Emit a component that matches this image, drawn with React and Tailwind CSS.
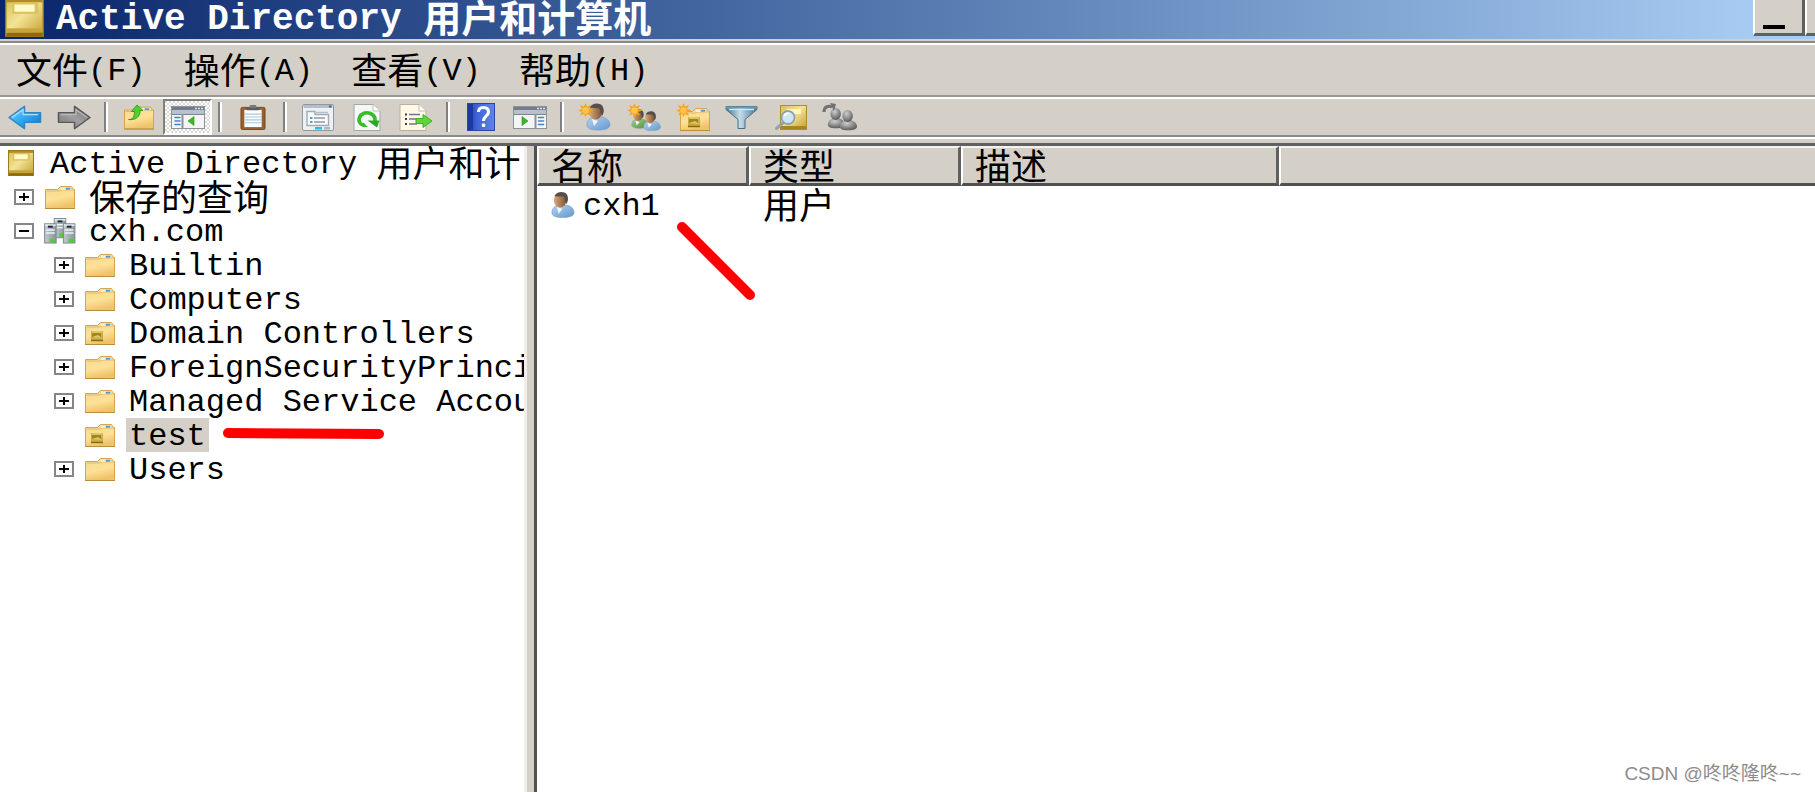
const mono = "font-['Liberation_Mono','Noto_Sans_CJK_SC',monospace]";

// Chinese runs are set larger than the half-width latin around them,
// so both are centred on the row instead of sharing a baseline
const Mixed = ({ text, cjk = "text-[36px]" }) => (
  <span className="flex items-center whitespace-pre">
    {text.split(/([\u4e00-\u9fff]+)/).filter(Boolean).map((part, i) =>
      /[\u4e00-\u9fff]/.test(part) ? (
        <span key={i} className={`${cjk} pb-1 leading-[34px] font-['Noto_Sans_CJK_SC',sans-serif]`}>
          {part}
        </span>
      ) : (
        <span key={i} className="pt-[3px] leading-[31px]">
          {part}
        </span>
      )
    )}
  </span>
);

const Gradients = () => (
  <svg className="absolute w-0 h-0" aria-hidden="true">
    <defs>
      <linearGradient id="folder" x1="0" y1="0" x2="0.3" y2="1">
        <stop offset="0" stopColor="#f6d88c" />
        <stop offset="0.6" stopColor="#fde198" />
        <stop offset="1" stopColor="#eec46a" />
      </linearGradient>
      <linearGradient id="gold" x1="0" y1="0" x2="1" y2="1">
        <stop offset="0" stopColor="#d9bf58" />
        <stop offset="0.45" stopColor="#f3e395" />
        <stop offset="1" stopColor="#c39d2c" />
      </linearGradient>
      <linearGradient id="blueArrow" x1="0" y1="0" x2="1" y2="1">
        <stop offset="0" stopColor="#8fd4fb" />
        <stop offset="0.5" stopColor="#2fa9f3" />
        <stop offset="1" stopColor="#0f6fc4" />
      </linearGradient>
      <linearGradient id="grayArrow" x1="0" y1="0" x2="1" y2="1">
        <stop offset="0" stopColor="#6a6a6a" />
        <stop offset="0.5" stopColor="#a0a0a0" />
        <stop offset="1" stopColor="#777" />
      </linearGradient>
      <linearGradient id="help" x1="0" y1="0" x2="1" y2="0">
        <stop offset="0" stopColor="#1d3fae" />
        <stop offset="0.35" stopColor="#3f64d6" />
        <stop offset="1" stopColor="#5f85ea" />
      </linearGradient>
      <linearGradient id="funnel" x1="0" y1="0" x2="1" y2="0">
        <stop offset="0" stopColor="#4a7187" />
        <stop offset="0.45" stopColor="#c4dcea" />
        <stop offset="1" stopColor="#4d7690" />
      </linearGradient>
      <linearGradient id="shirt" x1="0" y1="0" x2="1" y2="1">
        <stop offset="0" stopColor="#b5d5f3" />
        <stop offset="1" stopColor="#6396cb" />
      </linearGradient>
      <linearGradient id="shirtGreen" x1="0" y1="0" x2="1" y2="1">
        <stop offset="0" stopColor="#a4cf86" />
        <stop offset="1" stopColor="#4f8f3b" />
      </linearGradient>
      <linearGradient id="skin" x1="0" y1="0" x2="1" y2="0">
        <stop offset="0" stopColor="#dba878" />
        <stop offset="1" stopColor="#7f5433" />
      </linearGradient>
      <linearGradient id="server" x1="0" y1="0" x2="1" y2="0">
        <stop offset="0" stopColor="#c3cad0" />
        <stop offset="1" stopColor="#8a949c" />
      </linearGradient>
      <radialGradient id="ball" cx="0.4" cy="0.3" r="0.7">
        <stop offset="0" stopColor="#cfcfcf" />
        <stop offset="1" stopColor="#5c5c5c" />
      </radialGradient>
    </defs>
  </svg>
);

const Star = () => (
  <g>
    <path
      d="M7.500 0l1.500 3.800L13 2l-2 4 4.500 1.500L11 9l2 3.500-4-1.300L7.500 14 6 11l-4 1.500L4 9 0 7.500 4 6 2 2l4 1.800z"
      fill="#f9a21a"
    />
    <circle cx="7.500" cy="7.500" r="3.200" fill="#ffc54f" />
  </g>
);

const Person = ({ shirt = "url(#shirt)" }) => (
  <g>
    <path d="M1 22c0-5 3-7 7-8h8c5 1 8 4 8 8 0 3-4 5-12 5S1 25 1 22z" fill={shirt} stroke="#7f9fbe" strokeWidth="0.7" />
    <path d="M6 16l2 7 4-5z" fill="#f2f6fa" />
    <ellipse cx="9.500" cy="9" rx="6.500" ry="7.500" fill="url(#skin)" />
    <path d="M3.500 5C5 1 10-.5 14 1c4 1.500 5 8 2 12-1.500-2-1-5-3-8-3 .5-6-.5-9.500 0z" fill="#55504b" />
  </g>
);

const GrayPerson = () => (
  <g>
    <path d="M1 22c0-4 3-7 7-8h8c5 1 8 4 8 8 0 3-4 5-12 5S1 25 1 22z" fill="url(#ball)" />
    <ellipse cx="11.500" cy="8" rx="7" ry="8" fill="url(#ball)" />
  </g>
);

const FolderShape = () => (
  <g>
    <path d="M.5 3.500h12l3-3h11l2 3h1v19H.5z" fill="url(#folder)" stroke="#d3a64f" strokeWidth="1" />
    <path d="M1.500 5h13l3-1h11.500" fill="none" stroke="#e3b968" strokeWidth="1" />
    <rect x="16" y="1.500" width="10" height="2.500" fill="#f4efd9" />
    <rect x="20.500" y="1.700" width="5" height="2" rx="1" fill="#4d9be0" />
    <path d="M0 22.500h30" stroke="#b98d3b" strokeWidth="1" />
  </g>
);

const OuMark = () => (
  <g>
    <rect x="6" y="9" width="12" height="10" fill="#c9ae45" />
    <rect x="7" y="11" width="9" height="4" fill="#a3851a" />
    <path d="M7 10h10" stroke="#efdd8a" strokeWidth="1" />
    <path d="M7 15l6-2 4 3z" fill="#dcc76a" />
    <path d="M6 18.500h12" stroke="#8a6c0e" strokeWidth="1.500" />
  </g>
);

const FolderIcon = ({ ou }) => (
  <svg width="30" height="23" viewBox="0 0 30 23">
    <FolderShape />
    {ou && <OuMark />}
  </svg>
);

const BookIcon = ({ size = 26 }) => (
  <svg width={size} height={size} viewBox="0 0 27 27">
    <rect x="0.500" y="0.500" width="26" height="26" fill="url(#gold)" stroke="#9a7716" />
    <rect x="1" y="1" width="25" height="2" fill="#b08d28" />
    <rect x="5" y="3" width="18" height="8" fill="#dcc35f" />
    <rect x="6.500" y="4.500" width="14" height="5" fill="#fffbc8" />
    <rect x="1" y="21" width="25" height="3" fill="#c6a63b" />
    <rect x="1" y="24" width="25" height="2.500" fill="#8f6a08" />
  </svg>
);

const Server = ({ x, y }) => (
  <g transform={`translate(${x} ${y})`}>
    <rect x="0.500" y="0.500" width="12" height="20" fill="url(#server)" stroke="#7e8890" />
    <rect x="1" y="1" width="11" height="2" fill="#e1e6ea" />
    <rect x="4" y="2.500" width="5" height="2" fill="#1f2930" />
    <path d="M2 7h9M2 10h9" stroke="#eef2f5" strokeWidth="1.500" />
    <rect x="6" y="16" width="5" height="3.500" fill="#3fdc14" />
  </g>
);

const DomainIcon = () => (
  <svg width="32" height="26" viewBox="0 0 33 27">
    <Server x={10} y={0} />
    <Server x={0} y={5.5} />
    <Server x={19.5} y={5.5} />
  </svg>
);

const UserIcon = () => (
  <svg width="24" height="28" viewBox="0 0 25 28">
    <Person />
  </svg>
);

const arrow = "M1 12.500L17 1v6.500h16.500v10H17V24z";

const BackIcon = () => (
  <svg width="34" height="25" viewBox="0 0 35 25">
    <path d={arrow} fill="url(#blueArrow)" stroke="#2f86c4" strokeWidth="1.500" strokeLinejoin="round" />
    <path d="M4 12.500L15.500 4.500v5H31" fill="none" stroke="#a9defc" strokeWidth="1.200" />
  </svg>
);

const ForwardIcon = () => (
  <svg width="34" height="25" viewBox="0 0 35 25">
    <g transform="translate(35 0) scale(-1 1)">
      <path d={arrow} fill="url(#grayArrow)" stroke="#595959" strokeWidth="1.500" strokeLinejoin="round" />
      <path d="M4 12.500L15.500 4.500v5H31" fill="none" stroke="#b9b9b9" strokeWidth="1.200" />
    </g>
  </svg>
);

const FolderUpIcon = () => (
  <svg width="30" height="26" viewBox="0 0 30 26">
    <g transform="translate(0 2.500)">
      <FolderShape />
    </g>
    <path
      d="M4.500 15.500c4 .5 6-3 6-8H7.500L13 1l6 5.500h-3c.5 6-4.500 10-11.500 9z"
      fill="#4fd02e"
      stroke="#2c9a1a"
      strokeWidth="0.900"
      strokeLinejoin="round"
    />
  </svg>
);

const WindowIcon = ({ flip }) => (
  <svg width="34" height="23" viewBox="0 0 34 23">
    <rect x="0.500" y="0.500" width="33" height="22" fill="#f4f5f6" stroke="#8a929c" />
    <rect x="1" y="1" width="32" height="3" fill="#737d8b" />
    <path d="M24 2.500h2M27 2.500h2M30 2.500h2" stroke="#dfe4ea" strokeWidth="1.500" />
    <rect x="1" y="4" width="32" height="4.500" fill="#b9c0c9" />
    <path d="M1 8.500h32" stroke="#7b8491" />
    {flip ? (
      <g>
        <path d="M22.500 8v14" stroke="#8a929c" strokeWidth="2" />
        <path d="M25.500 11.500h5M25.500 15h5M25.500 18.500h5" stroke="#3d86cf" strokeWidth="1.600" strokeLinecap="round" />
        <path d="M9 10.500v9l6-4.500z" fill="#3fb526" stroke="#2c951a" strokeWidth="0.600" />
      </g>
    ) : (
      <g>
        <path d="M11.500 8v14" stroke="#8a929c" strokeWidth="2" />
        <path d="M4 11.500h5M4 15h5M4 18.500h5" stroke="#3d86cf" strokeWidth="1.600" strokeLinecap="round" />
        <path d="M23 10.500v9l-6-4.500z" fill="#3fb526" stroke="#2c951a" strokeWidth="0.600" />
      </g>
    )}
  </svg>
);

const ClipboardIcon = () => (
  <svg width="26" height="25" viewBox="0 0 26 26">
    <rect x="0.500" y="2.500" width="25" height="23" rx="1.500" fill="#96602f" stroke="#7a4719" />
    <rect x="4" y="5" width="18" height="18" fill="#fbfdfe" />
    <path d="M4 9.500h18M4 12.500h18M4 15.500h18M4 18.500h18" stroke="#a9c9dc" strokeWidth="1.200" />
    <rect x="6" y="2" width="14" height="3.500" rx="1" fill="#5d5d5d" />
    <rect x="9.500" y="0" width="7" height="3" rx="1" fill="#777" />
  </svg>
);

const PropertiesIcon = () => (
  <svg width="32" height="27" viewBox="0 0 32 27">
    <rect x="0.500" y="0.500" width="31" height="26" rx="1.500" fill="#eef1f4" stroke="#8e97a3" />
    <rect x="1.500" y="1" width="29" height="3" fill="#b5bdc8" />
    <rect x="27" y="1.500" width="2.500" height="2" fill="#56606d" />
    <path d="M5 7.500h8v3h13.500v11H5z" fill="#fbfcfd" stroke="#a1aab5" strokeWidth="1.400" />
    <path d="M14 8.500h12" stroke="#b9c0c9" strokeWidth="1.500" />
    <rect x="8" y="13" width="2.500" height="2" fill="#19b5ea" />
    <rect x="8" y="17" width="2.500" height="2" fill="#8c8c8c" />
    <path d="M12 14h11M12 18h11" stroke="#8f98a3" strokeWidth="1.400" />
    <rect x="13" y="23" width="7" height="2.500" fill="#22c0f0" />
    <rect x="22" y="23" width="6" height="2.500" fill="#b0b5bb" />
  </svg>
);

const RefreshIcon = () => (
  <svg width="28" height="27" viewBox="0 0 28 27">
    <path d="M1 .5h19l7 6.500v19.500H1z" fill="#f6f7f7" stroke="#a3a6a8" />
    <path d="M20 .5V7h7" fill="#fff" stroke="#b9bcbe" />
    <path d="M12 21.500C7 21 5 17 6.500 13.500 8 9.500 13 7.500 17.500 9.500c3.500 1.500 5 4.500 4.500 8" fill="none" stroke="#35bd2a" strokeWidth="3.600" />
    <path d="M14.500 16.500h12L24 23.500z" fill="#2aa823" />
    <path d="M10 18.500l5 4.500h-5z" fill="#35bd2a" />
  </svg>
);

const ExportIcon = () => (
  <svg width="34" height="27" viewBox="0 0 34 27">
    <path d="M1 .5h19l7 6.500v19.500H1z" fill="#fdf9e4" stroke="#b5b1a0" />
    <path d="M20 .5V7h7" fill="#fff" stroke="#c0bca9" />
    <path d="M6 10.500h2M6 15h2M6 20h2" stroke="#3b3b4c" strokeWidth="2" />
    <path d="M10 10.500h11M10 15h8M10 20h8" stroke="#77738c" strokeWidth="1.500" />
    <path d="M17 14.500h7v-4L33 17l-9 6.500v-4h-7z" fill="#5fd53a" stroke="#3aa91f" strokeWidth="0.900" />
  </svg>
);

const HelpIcon = () => (
  <svg width="28" height="28" viewBox="0 0 28 28">
    <rect x="0.500" y="0.500" width="27" height="27" fill="url(#help)" stroke="#2846a8" />
    <rect x="1" y="1" width="5" height="26" fill="#1c3a9f" />
    <path
      d="M11.500 9c0-3 2-4.500 5-4.500s5 1.500 5 4.500c0 4-5 4-5 9"
      fill="none"
      stroke="#fff"
      strokeWidth="3"
    />
    <rect x="14.800" y="20.500" width="3.400" height="3.400" rx="1" fill="#fff" />
  </svg>
);

const NewUserIcon = () => (
  <svg width="34" height="28" viewBox="0 0 34 28">
    <g transform="translate(8 0)">
      <Person />
    </g>
    <Star />
  </svg>
);

const NewGroupIcon = () => (
  <svg width="34" height="28" viewBox="0 0 34 28">
    <g transform="translate(4 6) scale(0.72)">
      <Person shirt="url(#shirtGreen)" />
    </g>
    <g transform="translate(16 8) scale(0.73)">
      <Person />
    </g>
    <Star />
  </svg>
);

const NewOuIcon = () => (
  <svg width="34" height="28" viewBox="0 0 34 28">
    <g transform="translate(4 5)">
      <FolderShape />
      <g transform="translate(2 0)">
        <OuMark />
      </g>
    </g>
    <Star />
  </svg>
);

const FunnelIcon = () => (
  <svg width="33" height="25" viewBox="0 0 33 25">
    <path d="M1 1.500h31v3L20 14.500v9h-7v-9L1 4.500z" fill="url(#funnel)" stroke="#4b7087" strokeLinejoin="round" />
    <path d="M1 1.500h31v2H1z" fill="#6f9ab5" />
    <path d="M4 4.500h25" stroke="#d8e8f1" strokeWidth="1.200" />
  </svg>
);

const FindIcon = () => (
  <svg width="32" height="27" viewBox="0 0 32 27">
    <g transform="translate(5 0)">
      <rect x="0.500" y="1.500" width="26" height="24" fill="url(#gold)" stroke="#b08d28" />
      <rect x="7" y="5" width="14" height="5" fill="#fff6b8" />
      <rect x="1" y="22" width="25" height="3" fill="#a9861b" />
    </g>
    <path d="M1.500 24.500L9 18" stroke="#9ba1a8" strokeWidth="3" strokeLinecap="round" />
    <circle cx="13" cy="13.500" r="6.500" fill="#cfe6f5" stroke="#8da3b3" strokeWidth="1.800" />
    <path d="M9.500 12c1-2.500 3-3 5-2.500" fill="none" stroke="#fff" strokeWidth="1.500" />
  </svg>
);

const AddToGroupIcon = () => (
  <svg width="35" height="28" viewBox="0 0 35 28">
    <g transform="translate(5 5) scale(0.75)">
      <GrayPerson />
    </g>
    <g transform="translate(17 7) scale(0.75)">
      <GrayPerson />
    </g>
    <path d="M2 9c0-5 4-7 8-5" fill="none" stroke="#707070" strokeWidth="3" />
    <path d="M8 0l6 1-2 7z" fill="#707070" />
  </svg>
);

const toolGroups = [
  [["后退", BackIcon], ["前进", ForwardIcon]],
  [["上一级", FolderUpIcon], ["显示树", WindowIcon, true]],
  [["剪贴板", ClipboardIcon]],
  [["属性", PropertiesIcon], ["刷新", RefreshIcon], ["导出列表", ExportIcon]],
  [["帮助", HelpIcon], ["操作窗格", () => <WindowIcon flip />]],
  [
    ["新建用户", NewUserIcon],
    ["新建组", NewGroupIcon],
    ["新建组织单位", NewOuIcon],
    ["筛选", FunnelIcon],
    ["查找", FindIcon],
    ["添加到组", AddToGroupIcon],
  ],
];

const Separator = () => (
  <div className="w-4 flex justify-center">
    <div className="w-1 h-[30px] border-l-2 border-l-[#808080] border-r-2 border-r-white" />
  </div>
);

const ToolButton = ({ label, Icon, pressed }) => (
  <button
    aria-label={label}
    className={
      pressed
        ? "w-[49px] h-9 flex items-center justify-center border-2 border-t-[#808080] border-l-[#808080] border-b-white border-r-white bg-[repeating-conic-gradient(#ffffff_0_25%,#dcd9d2_0_50%)] bg-size-[4px_4px]"
        : "w-[49px] h-9 flex items-center justify-center"
    }
  >
    <Icon />
  </button>
);

const TitleBar = () => (
  <header className="h-[39px] shrink-0 flex justify-between overflow-hidden bg-linear-to-r from-[#0a246a] to-[#a6caf0] to-96%">
    <div className="flex h-[35px] items-center gap-3 pl-[5px] text-white">
      <BookIcon size={39} />
      <h1 className="text-[36px] font-bold">
        <Mixed text="Active Directory 用户和计算机" cjk="text-[38px]" />
      </h1>
    </div>
    <div className="flex h-9">
      <button
        aria-label="最小化"
        className="w-[52px] bg-[#d4d0c8] border-l-2 border-l-white border-r-[3px] border-r-[#606060] border-b-[3px] border-b-[#606060] flex items-end pl-2 pb-1"
      >
        <span className="w-[22px] h-1 bg-black" />
      </button>
      <button
        aria-label="最大化"
        className="w-[10px] bg-[#d4d0c8] border-l-2 border-l-white border-b-[3px] border-b-[#606060]"
      />
    </div>
  </header>
);

const menus = ["文件(F)", "操作(A)", "查看(V)", "帮助(H)"];

const MenuBar = () => (
  <nav className="h-[50px] shrink-0 flex items-center gap-[38px] pl-4">
    {menus.map((m) => (
      <button key={m} className="text-[32px]">
        <Mixed text={m} />
      </button>
    ))}
  </nav>
);

const Toolbar = () => (
  <div className="shrink-0 border-t-2 border-t-[#9a9893]">
    <div className="h-10 border-t-2 border-t-white border-b-2 border-b-[#8a8a8a] flex items-center">
      {toolGroups.map((group, i) => (
        <div key={i} className="flex items-center">
          {i > 0 && <Separator />}
          {group.map(([label, Icon, pressed]) => (
            <ToolButton key={label} label={label} Icon={Icon} pressed={pressed} />
          ))}
        </div>
      ))}
    </div>
    <div className="h-1.5 border-t-2 border-t-white" />
  </div>
);

const tree = [
  { label: "Active Directory 用户和计", level: 0, icon: <BookIcon /> },
  { label: "保存的查询", level: 1, icon: <FolderIcon />, box: "+" },
  { label: "cxh.com", level: 1, icon: <DomainIcon />, box: "-" },
  { label: "Builtin", level: 2, icon: <FolderIcon />, box: "+" },
  { label: "Computers", level: 2, icon: <FolderIcon />, box: "+" },
  { label: "Domain Controllers", level: 2, icon: <FolderIcon ou />, box: "+" },
  { label: "ForeignSecurityPrinci", level: 2, icon: <FolderIcon />, box: "+" },
  { label: "Managed Service Accou", level: 2, icon: <FolderIcon />, box: "+" },
  { label: "test", level: 2, icon: <FolderIcon ou />, selected: true },
  { label: "Users", level: 2, icon: <FolderIcon />, box: "+" },
];

const indent = ["pl-[5px]", "pl-[14px]", "pl-[54px]"];

const Expander = ({ box }) => (
  <button aria-label={box === "+" ? "展开" : "折叠"} className="w-5 h-4 block">
    <svg width="20" height="16" viewBox="0 0 20 16">
      <rect x="1" y="1" width="18" height="14" fill="#fff" stroke="#868686" strokeWidth="2" />
      <path d={box === "+" ? "M5 8h10M10 4v8" : "M5 8h10"} stroke="#000" strokeWidth="2" />
    </svg>
  </button>
);

const TreeRow = ({ node }) => (
  <li className={`h-[34px] flex items-center gap-[10px] ${indent[node.level]}`}>
    {node.level > 0 && <div className="w-5 shrink-0">{node.box && <Expander box={node.box} />}</div>}
    <div className="w-8 shrink-0 flex justify-center">{node.icon}</div>
    <div className="relative">
      <div
        className={`h-[34px] px-[3px] flex items-center text-[32px] ${
          node.selected ? "bg-[#d4d0c8]" : ""
        }`}
      >
        <Mixed text={node.label} />
      </div>
      {node.selected && (
        <svg className="absolute left-full top-1.5 ml-2" width="176" height="20" viewBox="0 0 176 20">
          <path d="M11 9L162 10" stroke="#f00" strokeWidth="10" strokeLinecap="round" />
        </svg>
      )}
    </div>
  </li>
);

const th =
  "h-10 p-0 pl-3 text-left font-normal border-t-2 border-t-[#f4f2ee] border-l-2 border-l-white border-b-[3px] border-b-[#505050] bg-[#d4d0c8]";

const ListPane = () => (
  <section className="relative flex-1 min-w-0 bg-white border-l-[3px] border-l-[#505050]">
    <table className="w-full table-fixed border-separate border-spacing-0 text-[32px]">
      <colgroup>
        <col className="w-[212px]" />
        <col className="w-[212px]" />
        <col className="w-[318px]" />
        <col />
      </colgroup>
      <thead>
        <tr>
          {["名称", "类型", "描述"].map((h) => (
            <th key={h} className={`${th} border-r-[3px] border-r-[#606060]`}>
              <div className="h-[35px] flex items-center">
                <Mixed text={h} />
              </div>
            </th>
          ))}
          <td className={th} />
        </tr>
      </thead>
      <tbody>
        <tr>
          <td className="p-0 pl-[14px]">
            <div className="h-[38px] flex items-center gap-2">
              <UserIcon />
              <Mixed text="cxh1" />
            </div>
          </td>
          <td className="p-0 pl-[14px]">
            <Mixed text="用户" />
          </td>
          <td />
          <td />
        </tr>
      </tbody>
    </table>
    <svg className="absolute left-[137px] top-[73px]" width="84" height="84" viewBox="0 0 84 84">
      <path d="M8 8L76 76" stroke="#f00" strokeWidth="10" strokeLinecap="round" />
    </svg>
    <div className="absolute right-[14px] bottom-2 text-[19px] leading-5 text-[#8c8c8c] font-['Liberation_Sans','Noto_Sans_CJK_SC',sans-serif]">
      CSDN @咚咚隆咚~~
    </div>
  </section>
);

export default function App() {
  return (
    <div className={`h-screen flex flex-col overflow-hidden bg-[#d4d0c8] text-black ${mono}`}>
      <Gradients />
      <TitleBar />
      <div className="h-1.5 shrink-0 border-t-2 border-t-[#d4d0c8]">
        <div className="h-1 bg-white border-t-2 border-t-[#8c8a86]" />
      </div>
      <MenuBar />
      <Toolbar />
      <main className="flex-1 min-h-0 flex border-t-[3px] border-t-[#606060]">
        <aside className="w-[524px] shrink-0 overflow-hidden bg-white">
          <ul>
            {tree.map((node) => (
              <TreeRow key={node.label} node={node} />
            ))}
          </ul>
        </aside>
        <div className="w-[10px] shrink-0 border-l-[3px] border-l-[#f1efeb]" />
        <ListPane />
      </main>
    </div>
  );
}
